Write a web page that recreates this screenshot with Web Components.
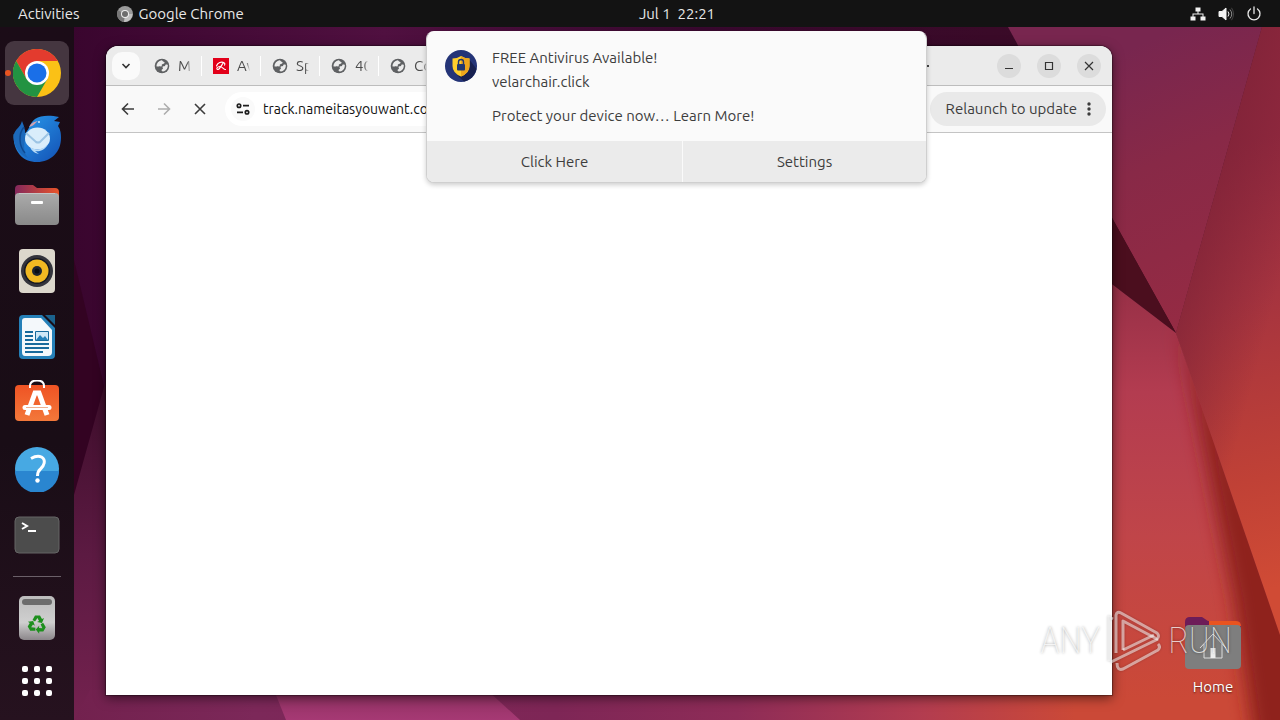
<!DOCTYPE html>
<html lang="en">
<head>
<meta charset="utf-8">
<title>Desktop</title>
<style>
html,body{margin:0;height:100%;overflow:hidden;background:#2c001e}
body{font:15px/20px Ubuntu,"Noto Sans",sans-serif;color:#3d3d3d}
</style>
</head>
<body>
<desktop-shell>
  <top-bar slot="top"></top-bar>
  <app-dock slot="dock"></app-dock>
  <browser-window slot="window">
    <browser-tab slot="tabs" icon="globe">M</browser-tab>
    <browser-tab slot="tabs" icon="avira">Av</browser-tab>
    <browser-tab slot="tabs" icon="globe">Sp</browser-tab>
    <browser-tab slot="tabs" icon="globe">40</browser-tab>
    <browser-tab slot="tabs" icon="globe">Co</browser-tab>
  </browser-window>
  <desktop-icon slot="icons">Home</desktop-icon>
  <notification-banner slot="notice">
    <span slot="title">FREE Antivirus Available!</span>
    <span slot="source">velarchair.click</span>
    <span slot="message">Protect your device now… Learn More!</span>
  </notification-banner>
  <any-watermark slot="mark"></any-watermark>
</desktop-shell>

<script>
const define = (name, html, setup) => {
  const t = document.createElement('template');
  t.innerHTML = html;
  customElements.define(name, class extends HTMLElement {
    constructor() {
      super();
      this.attachShadow({mode: 'open'}).append(t.content.cloneNode(true));
    }
    connectedCallback() { if (setup) setup(this, this.shadowRoot); }
  });
};

const icons = {
  globe: `<svg viewBox="0 0 16 16" width="16" height="16"><circle cx="8" cy="8" r="7.3" fill="#5f6163"/><path d="M7.6 2.2c1 .2 1 1.3 2.100 1.500 1 .3 1.200 1.200.4 1.900-.7.600-1.700.4-2.200 1-.4.600.3 1.300-.3 1.700-.9.500-1.800-.2-2.800.1-.9.200-1.500.3-2.400-.2.200-3 2.300-5.500 5.200-6z" fill="#ebebeb"/><path d="M13.800 6.900c.3 2.900-1.500 6-4.900 6.700-.7-.4-1.500-.7-1.300-1.600.1-.8 1.500-.8 1.400-1.700-.1-.6-.8-.8-.5-1.500.4-.8 1.700-.3 2.300-.8.700-.5.400-1.100 1-1.400.6-.3 1.400-.1 2 .3z" fill="#ebebeb"/></svg>`,
  avira: `<svg viewBox="0 0 16 16" width="16" height="16"><path fill="#e2001a" d="M0 0h16v16H0z"/><path d="M3.500 8C4.500 4.800 8.500 3 11 4.800c1 .8 1 1.700.6 2.200M10.200 5C8 8 6.500 11.800 4.500 11.500c-1.500-.6-.2-3 2.300-3 2.700 0 3.500 3 5.700 3" fill="none" stroke="#fff" stroke-width="1.200" stroke-linecap="round"/></svg>`
};

define('desktop-shell', `
<style>
:host{display:grid;grid-template:27px minmax(0,1fr)/74px minmax(0,1fr);height:100vh;position:relative;isolation:isolate}
.wall{position:absolute;inset:0;width:100%;height:100%;z-index:-1}
.top{grid-column:1/-1}
main{display:flex;position:relative;min-height:0}
.win{flex:1;padding:19px 0 25px 32px;display:flex}
aside{width:168px;display:flex;flex-direction:column;justify-content:flex-end;align-items:flex-end;padding:0 34px 23px 0;box-sizing:border-box}
</style>
<svg class="wall" viewBox="0 0 1280 720" preserveAspectRatio="none" aria-hidden="true">
<defs>
<linearGradient id="base" x1="0" y1="0" x2="1" y2="0"><stop offset="0" stop-color="#34032a"/><stop offset=".3" stop-color="#501040"/><stop offset=".55" stop-color="#38082e"/><stop offset="1" stop-color="#3c0c22"/></linearGradient>
<linearGradient id="left" gradientUnits="userSpaceOnUse" x1="0" y1="390" x2="0" y2="720"><stop offset="0" stop-color="#3f0e2c"/><stop offset=".5" stop-color="#5c1a42"/><stop offset="1" stop-color="#74224f"/></linearGradient>
<linearGradient id="low" gradientUnits="userSpaceOnUse" x1="74" y1="0" x2="1280" y2="0"><stop offset="0" stop-color="#72214e"/><stop offset=".15" stop-color="#7c2859"/><stop offset=".4" stop-color="#7e2656"/><stop offset=".55" stop-color="#8e2c57"/><stop offset=".7" stop-color="#b23c50"/><stop offset=".83" stop-color="#cb4937"/><stop offset="1" stop-color="#cb4937"/></linearGradient>
<linearGradient id="upper" gradientUnits="userSpaceOnUse" x1="1100" y1="60" x2="1210" y2="330"><stop offset="0" stop-color="#78264f"/><stop offset=".4" stop-color="#882947"/><stop offset="1" stop-color="#962b43"/></linearGradient>
<linearGradient id="right" gradientUnits="userSpaceOnUse" x1="1210" y1="150" x2="1310" y2="580"><stop offset="0" stop-color="#93293f"/><stop offset=".35" stop-color="#a6343f"/><stop offset=".75" stop-color="#c04136"/><stop offset="1" stop-color="#d04b35"/></linearGradient>
<linearGradient id="rshade" gradientUnits="userSpaceOnUse" x1="1205" y1="180" x2="1300" y2="205"><stop offset="0" stop-color="#7a2136" stop-opacity=".7"/><stop offset="1" stop-color="#7a2136" stop-opacity="0"/></linearGradient>
<linearGradient id="mid" gradientUnits="userSpaceOnUse" x1="0" y1="290" x2="0" y2="700"><stop offset="0" stop-color="#983047"/><stop offset=".25" stop-color="#b33c50"/><stop offset=".6" stop-color="#c04549"/><stop offset="1" stop-color="#cb4937"/></linearGradient>
<linearGradient id="pink" x1="0" y1="0" x2="0" y2="1"><stop offset="0" stop-color="#8e3060"/><stop offset="1" stop-color="#a63974"/></linearGradient>
<clipPath id="midclip"><path d="M1100 275l76 58 104 302v85h-180z"/></clipPath>
<filter id="soft" x="-50%" y="-50%" width="200%" height="200%"><feGaussianBlur stdDeviation="9"/></filter>
</defs>
<path d="M0 0h1280v720H0z" fill="url(#base)"/>
<path d="M74 260L105 390 74 500z" fill="#330322"/>
<path d="M0 720V700L74 495 106 380 300 500h980v220z" fill="url(#left)"/>
<path d="M90 690h1190v30H74z" fill="url(#low)"/>
<path d="M274 690h213l33 30H286z" fill="url(#pink)"/>
<path d="M1008 27h254l-86 306L1112 218z" fill="url(#upper)"/>
<path d="M1262 27h18v620L1176 333z" fill="url(#right)"/>
<path d="M1262 27h18v620L1176 333z" fill="url(#rshade)"/>
<path d="M1100 196l76 137-76-58z" fill="#4b0e1e"/>
<path d="M1100 275l76 58 104 302v85h-180z" fill="url(#mid)"/>
<g clip-path="url(#midclip)"><path d="M1180 328L1300 625v130h-44L1234 600z" fill="#8f221b" filter="url(#soft)"/></g>
</svg>
<div class="top"><slot name="top"></slot></div>
<slot name="dock"></slot>
<main>
  <div class="win"><slot name="window"></slot></div>
  <aside><slot name="icons"></slot></aside>
  <slot name="notice"></slot>
  <slot name="mark"></slot>
</main>`);

define('top-bar', `
<style>
:host{display:grid;grid-template-columns:74px 1fr auto 1fr;align-items:center;height:27px;background:#131313;color:#e8e8e8;line-height:26px}
button{all:unset;display:flex;align-items:center;gap:6px;white-space:pre}
.l{display:flex;gap:37px;grid-column:1/3;padding-left:18px}
.r{display:flex;justify-content:flex-end;gap:12px;padding-right:18px}
</style>
<div class="l"><button>Activities</button>
<button><svg width="16" height="16" viewBox="0 0 16 16"><circle cx="8" cy="8" r="8" fill="#9a9a9a"/><path d="M8 8L1 4.200A8 8 0 0 0 7 16l4-7z" fill="#777"/><path d="M8 8h7.500A8 8 0 0 1 7 16z" fill="#c0c0c0"/><circle cx="8" cy="8" r="4" fill="#eee"/><circle cx="8" cy="8" r="3" fill="#6d6d6d"/></svg>Google Chrome</button></div>
<button>Jul 1  22:21</button>
<button class="r" aria-label="System menu">
<svg width="16" height="16" viewBox="0 0 16 16" fill="#f2f2f2"><path d="M5.500 1.500h5v4h-2v2h5v3h2v4h-5v-4h2v-2h-9v2h2v4h-5v-4h2v-3h5v-2h-2z"/></svg>
<svg width="16" height="16" viewBox="0 0 16 16" fill="none" stroke="#f2f2f2"><path d="M1 5.500h3L8 2v12L4 10.500H1z" fill="#f2f2f2"/><path d="M10 5.500q2 2.500 0 5"/><path d="M12 3.500q3.500 4.500 0 9" stroke="#8a8a8a"/><path d="M13.500 1.800q4 6.200 0 12.400" stroke="#444"/></svg>
<svg width="16" height="16" viewBox="0 0 16 16" fill="none" stroke="#e8e8e8" stroke-width="1.300"><path d="M4.500 3a6 6 0 1 0 7 0M8 1v6.500" stroke-linecap="round"/></svg>
</button>`);

define('app-dock', `
<style>
:host{display:block;background:linear-gradient(#1b0c17,#190d16 60%,#26121f)}
nav{display:flex;flex-direction:column;align-items:center;gap:2px;padding-top:14px}
button{all:unset;width:64px;height:64px;border-radius:9px;display:grid;place-items:center;position:relative}
.on{background:#453640}
.on::before{content:"";position:absolute;left:0;top:29px;width:6px;height:6px;border-radius:3px;background:#e95420}
hr{width:48px;height:1px;border:0;margin:7px 0;background:#6b6069}
.apps{height:58px}
svg{display:block}
</style>
<nav aria-label="Dock">
<button class="on" aria-label="Google Chrome"><svg width="48" height="48" viewBox="0 0 48 48"><circle cx="24" cy="24" r="24" fill="#fbc116"/><path d="M3.200 12A24 24 0 0 1 44.800 12H24L13.600 30z" fill="#e33b2e"/><path d="M3.200 12A24 24 0 0 0 24 48L34.400 30 24 34 13.600 30z" fill="#229342"/><circle cx="24" cy="24" r="12" fill="#fff"/><circle cx="24" cy="24" r="9.500" fill="#1a6fe8"/></svg></button>
<button aria-label="Thunderbird"><svg width="50" height="50" viewBox="0 0 50 50"><defs><linearGradient id="a" x1="0" y1="0" x2="1" y2="1"><stop stop-color="#2aa0f0"/><stop offset="1" stop-color="#1350b4"/></linearGradient></defs><path d="M1.500 20C1 38 11 48 25 48c14 0 24-10 24-24 0-6-1-9-3-12l2-4-6-1 5-4C38 1 29 1 23 5c-5 4-5 8-8 12-2 4-10 8-13.500 3z" fill="url(#a)"/><path d="M10 7C8 14 4 14 2 20c-2 10 5 21 14 24-5-7-4-12-3-18 1-7 0-12-3-19z" fill="#1c69bb"/><path d="M12 13C6 20 7 32 13 39" fill="none" stroke="#0f4a92" stroke-width="1.500"/><ellipse cx="25.500" cy="24.500" rx="12.500" ry="11" fill="#d9edfb"/><path d="M14 19l10 9q2 1 4 0l9-9" fill="none" stroke="#9cc4e4" stroke-width="2"/><path d="M18 33c6 4 13 3 18-3-3 6-8 8-13 7l4 3c-5-1-8-4-9-7z" fill="#b9dcf7"/><path d="M17 13c3-5 5-5 9-6-4 3-4 5-9 6z" fill="#cfa0b0"/><circle cx="27" cy="8" r="1" fill="#cfe6fa"/></svg></button>
<button aria-label="Files"><svg width="46" height="42" viewBox="0 0 46 42"><defs><linearGradient id="b"><stop stop-color="#83285c"/><stop offset="1" stop-color="#e9542a"/></linearGradient><linearGradient id="c" x1="0" y1="0" x2="0" y2="1"><stop stop-color="#ababab"/><stop offset="1" stop-color="#898989"/></linearGradient></defs><path d="M1 30V5q0-4 4-4h14l4 3h18q4 0 4 4v20z" fill="url(#b)"/><rect x="1" y="9" width="44" height="32" rx="4" fill="url(#c)"/><path d="M5 9.500h36" stroke="#c4c4c4"/><rect x="17" y="17" width="12" height="3" rx="1" fill="#fff"/></svg></button>
<button aria-label="Rhythmbox"><svg width="38" height="46" viewBox="0 0 38 46"><rect x="1" y="1" width="36" height="44" rx="4" fill="#dcd7cc"/><circle cx="19" cy="23" r="16" fill="#34343c"/><circle cx="19" cy="23" r="13" fill="#151822"/><circle cx="19" cy="23" r="11.500" fill="#f0b822"/><circle cx="19" cy="23" r="5" fill="#1d2430"/><circle cx="19" cy="23" r="2.500" fill="#0a0d14"/></svg></button>
<button aria-label="LibreOffice Writer"><svg width="38" height="46" viewBox="0 0 38 46"><path d="M5 1h19l13 13v27q0 4-4 4H5q-4 0-4-4V5q0-4 4-4z" fill="#2580b8"/><path d="M7 4h16l11 12v22q0 4-4 4H7q-3 0-3-4V7q0-3 3-3z" fill="#f4f8fb"/><path d="M27 1h10v10z" fill="#1b628d"/><path d="M7 18h8M7 22h8M7 26h8M7 30h24M7 34h24M7 38h18" stroke="#186a9c" stroke-width="2"/><path d="M17.500 17.500h13v9h-13z" fill="#cfe7f6" stroke="#186a9c"/><path d="M18 26l4-5 3 3 2-2 3 4z" fill="#2580b8"/></svg></button>
<button aria-label="Ubuntu Software"><svg width="46" height="46" viewBox="0 0 46 46"><defs><linearGradient id="d" x1="0" y1="0" x2="0" y2="1"><stop stop-color="#ef5324"/><stop offset="1" stop-color="#f3783a"/></linearGradient></defs><rect x="1" y="5" width="44" height="36" rx="4" fill="url(#d)"/><path d="M16 8V6q0-5.500 7-5.500T30 6v2" fill="none" stroke="#fff" stroke-width="2"/><path d="M13 35l8-22h4l8 22" fill="none" stroke="#fff" stroke-width="5"/><path d="M11 27.500h24" stroke="#fff" stroke-width="5" stroke-linecap="round"/><path d="M12 27.500h22" stroke="#efb090"/></svg></button>
<button aria-label="Help"><svg width="46" height="46" viewBox="0 0 46 46"><circle cx="23" cy="23" r="22" fill="#47a9e3"/><path d="M1 25h44a22 22 0 0 1-44 0z" fill="#2a86d0"/><path d="M17 12.500q6-3.500 10.500-1.500c5 3 2.500 9-1 12-2.500 2-3 3.500-3 7" fill="none" stroke="#fff" stroke-width="3"/><circle cx="23.500" cy="34.500" r="2.200" fill="#fff"/></svg></button>
<button aria-label="Terminal"><svg width="46" height="38" viewBox="0 0 46 38"><rect x="1" y="1" width="44" height="36" rx="4" fill="#4c4c4c" stroke="#656565"/><path d="M8 7l5 3-5 3M14 15h8" fill="none" stroke="#fff" stroke-width="2"/></svg></button>
<hr>
<button aria-label="Trash"><svg width="38" height="46" viewBox="0 0 38 46"><defs><linearGradient id="e" x1="0" y1="0" x2="0" y2="1"><stop stop-color="#bcbcbc"/><stop offset=".6" stop-color="#cfcfcf"/><stop offset="1" stop-color="#8b868a"/></linearGradient><path id="arrow" d="M14.500 25l2.500-4.500h5L24 24l2-1-2 5-5-1 2-1-1.500-3L17 26.500z"/></defs><rect x="1" y="1" width="36" height="44" rx="5" fill="url(#e)"/><rect x="4" y="4" width="30" height="6" rx="3" fill="#6c6c6c"/><g fill="#1d8f1d"><use href="#arrow"/><use href="#arrow" transform="rotate(120 19 29.500)"/><use href="#arrow" transform="rotate(240 19 29.500)"/></g></svg></button>
<button class="apps" aria-label="Show Applications"><svg width="30" height="30" viewBox="0 0 30 30" fill="#fff"><defs><g id="row"><rect width="6" height="6" rx="2"/><rect x="12" width="6" height="6" rx="2"/><rect x="24" width="6" height="6" rx="2"/></g></defs><use href="#row"/><use href="#row" y="12"/><use href="#row" y="24"/></svg></button>
</nav>`);

define('browser-tab', `
<style>
:host{display:flex;align-items:center;gap:8px;width:58px;flex:none;border-right:1px solid #fff;height:20px;box-sizing:border-box;padding-left:10px;margin-right:1px;line-height:20px}
:host(:last-child){border:0}
.t{width:13px;overflow:hidden;white-space:nowrap;color:#4c4c4c;-webkit-mask:linear-gradient(90deg,#000 70%,transparent);mask:linear-gradient(90deg,#000 70%,transparent)}
.i,svg{display:block;height:16px}
</style><span class="i"></span><span class="t"><slot></slot></span>`,
(h, r) => { r.querySelector('.i').innerHTML = icons[h.getAttribute('icon')]; });

define('browser-window', `
<style>
:host{flex:1;min-width:0;display:flex;flex-direction:column;background:#fff;border-radius:12px 12px 0 0;overflow:hidden;box-shadow:0 0 1px 1px #0005,0 3px 12px #0008}
.strip{display:flex;align-items:center;height:39px;background:#ebebeb;border-bottom:1px solid #bdbdbd;padding:0 11px 0 6px}
.bar{display:flex;align-items:center;height:46px;background:#f9f9f9;border-bottom:1px solid #c4c4c4;padding:0 6px 0 4px}
button{all:unset;display:grid;place-items:center;flex:none}
.search{width:28px;height:28px;border-radius:10px;background:#fafafa;margin-right:4px}
.space{flex:1}
.plus{width:24px;height:24px;margin-right:62px}
.ctl{display:flex;gap:16px}
.ctl button{width:24px;height:24px;border-radius:12px;background:#dcdcdc}
.nav{width:36px;height:36px}
.omni{flex:1;display:flex;align-items:center;gap:8px;height:34px;border-radius:17px;background:#fff;padding:0 6px;margin:0 8px 0 7px;min-width:0}
.site{width:24px;height:24px;border-radius:12px;background:#fafafa}
input{all:unset;flex:1;min-width:0;color:#111;font-size:14px}
.pill{display:flex;gap:4px;align-items:center;height:34px;border-radius:17px;background:#e9e9e9;padding:0 9px 0 16px}
</style>
<div class="strip">
<button class="search" aria-label="Search tabs"><svg width="10" height="10" viewBox="0 0 10 10"><path d="M1.500 3L5 6.500 8.500 3" fill="none" stroke="#333" stroke-width="1.600"/></svg></button>
<slot name="tabs"></slot>
<span class="space"></span>
<button class="plus" aria-label="New tab"><svg width="12" height="12" viewBox="0 0 12 12"><path d="M0 6h12M6 0v12" stroke="#444" stroke-width="2"/></svg></button>
<div class="ctl">
<button aria-label="Minimize"><svg width="10" height="10" viewBox="0 0 10 10"><path d="M1 7.500h8" stroke="#333"/></svg></button>
<button aria-label="Maximize"><svg width="10" height="10" viewBox="0 0 10 10"><path d="M1.500 1.500h7v7h-7z" fill="none" stroke="#333" stroke-width="1.200"/></svg></button>
<button aria-label="Close"><svg width="10" height="10" viewBox="0 0 10 10"><path d="M1 1l8 8M9 1l-8 8" stroke="#333" stroke-width="1.200"/></svg></button>
</div></div>
<div class="bar">
<button class="nav" aria-label="Back"><svg width="16" height="16" viewBox="0 0 16 16" fill="none" stroke="#3c3c3c" stroke-width="1.600"><path d="M14 8H3M8 2.500L2.500 8 8 13.500"/></svg></button>
<button class="nav" aria-label="Forward"><svg width="16" height="16" viewBox="0 0 16 16" fill="none" stroke="#adadad" stroke-width="1.600"><path d="M2 8h11M8 2.500L13.500 8 8 13.500"/></svg></button>
<button class="nav" aria-label="Stop"><svg width="16" height="16" viewBox="0 0 16 16" fill="none" stroke="#3c3c3c" stroke-width="1.600"><path d="M3 3l10 10M13 3L3 13"/></svg></button>
<div class="omni"><button class="site" aria-label="Site information"><svg width="14" height="12" viewBox="0 0 14 12" fill="none" stroke="#1c1c1c" stroke-width="1.700"><circle cx="3" cy="2.700" r="1.700"/><path d="M7 2.700h6M1 9.300h6"/><circle cx="11" cy="9.300" r="1.700"/></svg></button>
<input aria-label="Address" value="track.nameitasyouwant.com"></div>
<button class="pill">Relaunch to update<svg width="16" height="16" viewBox="0 0 16 16" fill="#3c3c3c"><circle cx="8" cy="3" r="1.700"/><circle cx="8" cy="8" r="1.700"/><circle cx="8" cy="13" r="1.700"/></svg></button>
</div>`);

define('notification-banner', `
<style>
:host{position:absolute;top:4px;left:0;right:1px;width:501px;margin:0 auto;box-sizing:border-box;border:1px solid #cfcfcf;border-top-color:#fafafa;border-radius:8px;background:#fafafa;overflow:hidden;box-shadow:0 2px 5px #0003}
.body{display:flex;gap:15px;padding:14px 18px 13px}
.body svg{margin-top:4px;flex:none}
.text{display:flex;flex-direction:column;line-height:24px}
.msg{margin-top:10px}
.acts{display:grid;grid-template-columns:21fr 20fr;gap:1px}
button{all:unset;text-align:center;line-height:41px;background:#ebebeb}
</style>
<div class="body">
<svg width="32" height="32" viewBox="0 0 32 32"><circle cx="16" cy="16" r="16" fill="#243477"/><path d="M24 9l7.500 10A16 16 0 0 1 19 31.500L12 25z" fill="#17204f"/><path d="M16 6q4 2.500 8.500 2.500V16q0 7-8.500 10.500Q7.500 23 7.500 16V8.500Q12 8.500 16 6z" fill="#ffcf2d"/><path d="M16 6q4 2.500 8.500 2.500V16q0 7-8.500 10.500z" fill="#eda61c"/><rect x="12" y="14" width="8" height="6.500" rx="1" fill="#22386f"/><path d="M13.500 14v-2a2.500 2.500 0 0 1 5 0v2" fill="none" stroke="#22386f" stroke-width="1.400"/></svg>
<div class="text"><slot name="title"></slot><slot name="source"></slot><div class="msg"><slot name="message"></slot></div></div></div>
<div class="acts"><button>Click Here</button><button>Settings</button></div>`);

define('desktop-icon', `
<style>
:host{display:block;width:66px;color:#fff;text-shadow:0 1px 2px #0009}
a{color:inherit;text-decoration:none;display:flex;flex-direction:column;align-items:center;gap:8px}
</style>
<a href="#home"><svg width="56" height="52" viewBox="0 0 56 52"><path d="M0 30V5q0-5 5-5h12l6 4h28q5 0 5 5v20z" fill="#6d1c58"/><path d="M24 4h27q5 0 5 5H24z" fill="#e95420"/><rect y="8" width="56" height="44" rx="4" fill="#7e7e7e"/><path d="M15 31l13-14 13 14M19 27v14h18V27" fill="none" stroke="#ddd"/><path d="M25.500 31h5v10h-5z" fill="#eee"/></svg><span><slot></slot></span></a>`);

define('any-watermark', `
<style>
:host{position:absolute;right:48px;bottom:48px;display:flex;align-items:center;gap:7px;font:36px/62px "Roboto Condensed","Liberation Sans Narrow",Lato,sans-serif;font-weight:100;color:#ffffffc0;text-shadow:0 0 3px #0007;pointer-events:none}
svg{filter:drop-shadow(0 0 1px #0006)}
</style>
<span>ANY</span>
<svg width="54" height="62" viewBox="0 0 54 62" fill="none" stroke="#ffffff88" stroke-width="3" stroke-linejoin="round"><path d="M6 9L2 7v44M9 43V5q1-4 5-2l36 20q3 3 0 6L16 11v29"/><path d="M16 40L47 25M4 52l47-23M10 53q0 8 6 6l35-19q3-3 0-6"/></svg>
<span>RUN</span>`);
</script>
</body>
</html>
